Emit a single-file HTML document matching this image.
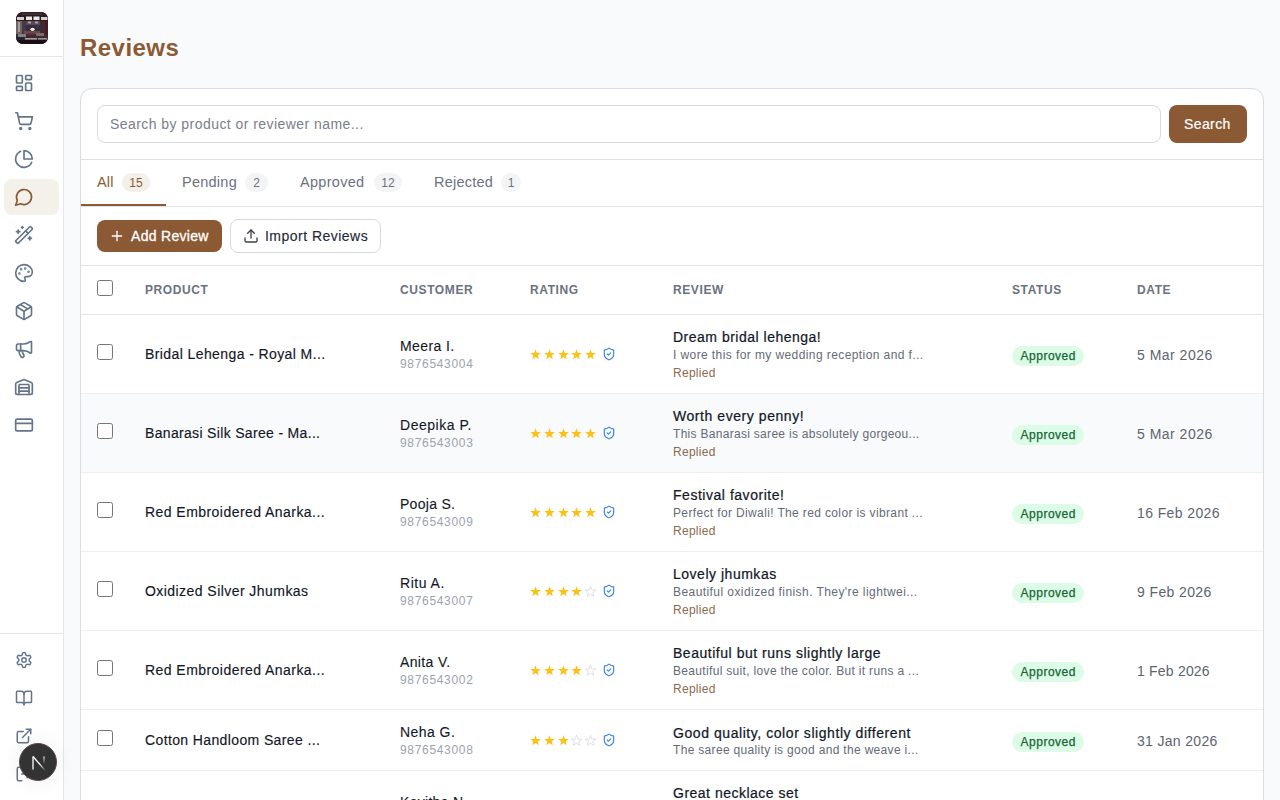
<!DOCTYPE html><html><head><meta charset="utf-8"><style>
*{box-sizing:border-box;margin:0;padding:0}
html,body{width:1280px;height:800px;overflow:hidden}
body{font-family:"Liberation Sans",sans-serif;background:#f9fafb;color:#111827;position:relative}
.i{position:absolute;fill:none;stroke-linecap:round;stroke-linejoin:round;overflow:visible}
.a{position:absolute;white-space:nowrap}
.side{position:absolute;left:0;top:0;width:64px;height:800px;background:#fff;border-right:1px solid #e5e7eb}
.logo{position:absolute;left:16px;top:12px;width:32px;height:32px;border-radius:7px;overflow:hidden;background:#2a1c22}
.hl{position:absolute;height:1px;background:#e5e7eb}
.nav{position:absolute;left:4px;top:179px;width:55px;height:36px;border-radius:8px;background:#f4f0ea}
h1{position:absolute;left:80px;top:34px;font-size:24px;line-height:28px;font-weight:700;color:#8b5a34;letter-spacing:0.45px}
.card{position:absolute;left:80px;top:88px;width:1184px;height:760px;background:#fff;border:1px solid #d9dde3;border-radius:12px;overflow:hidden}
.inp{position:absolute;left:16px;top:16px;width:1064px;height:38px;border:1px solid #d5d9e0;border-radius:8px}
.ph{left:29px;top:28px;font-size:14px;line-height:14px;color:#7a808a;letter-spacing:0.45px}
.sbtn{position:absolute;left:1088px;top:16px;width:78px;height:38px;border-radius:8px;background:#8b5a34}
.sbt{left:1103px;top:28px;font-size:14px;line-height:14px;color:#fff;letter-spacing:0.3px;-webkit-text-stroke:0.2px #fff}
.tab{font-size:14.5px;line-height:14px;color:#6b7280;letter-spacing:0.2px}
.bdg{position:absolute;height:19px;border-radius:10px;background:#f3f4f6;font-size:12px;line-height:21px;color:#6b7280;text-align:center}
.btn1{position:absolute;left:16px;top:131px;width:125px;height:32px;border-radius:8px;background:#8b5a34}
.btn2{position:absolute;left:149px;top:130px;width:151px;height:34px;border-radius:8px;border:1px solid #d5d9e0;background:#fff}
.th{font-size:12px;line-height:12px;font-weight:700;color:#6b7280;letter-spacing:0.6px}
.cb{position:absolute;width:16px;height:16px;border:1.4px solid #767676;border-radius:2.5px;background:#fff}
.row{position:absolute;left:0;width:1182px;border-bottom:1px solid #eceef1}
.pn{font-size:14px;line-height:14px;color:#111827;letter-spacing:0.4px;-webkit-text-stroke:0.15px #111827}
.cn{font-size:14px;line-height:14px;color:#111827;letter-spacing:0.3px;-webkit-text-stroke:0.1px #111827}
.ph2{font-size:12px;line-height:12px;color:#9ca3af;letter-spacing:0.9px}
.rt{font-size:14px;line-height:14px;color:#111827;letter-spacing:0.5px;-webkit-text-stroke:0.22px #111827}
.rx{font-size:12px;line-height:12px;color:#646b77;letter-spacing:0.35px}
.rp{font-size:12px;line-height:12px;color:#8b6a4e;letter-spacing:0.12px}
.st{position:absolute;width:72px;height:20px;border-radius:10px;background:#dcfce7;color:#166534;font-size:12px;line-height:20px;text-align:center;font-weight:400;letter-spacing:0.5px;-webkit-text-stroke:0.25px #166534;text-indent:0.5px}
.dt{font-size:14px;line-height:14px;color:#5d6470;letter-spacing:0.65px}
.nbtn{position:absolute;left:19px;top:743px;width:38px;height:38px;border-radius:50%;background:#333;border:1px solid #5a4a48;box-shadow:0 0 16px 6px rgba(0,0,0,0.04)}
</style></head><body>
<div class="side"><div class="logo"><svg width="32" height="32" viewBox="0 0 32 32" style="display:block;filter:blur(0.45px)"><rect x="0" y="0" width="32" height="32" fill="#3a2c30"/><rect x="0" y="0" width="32" height="4" fill="#2c1e22"/><rect x="6" y="1" width="20" height="2" fill="#3e302c"/><rect x="0" y="4" width="32" height="5" fill="#2a1c22"/><rect x="1" y="5" width="7" height="3" fill="#d4d0d2"/><rect x="10" y="4.5" width="6" height="3.5" fill="#ece8ea"/><rect x="17.5" y="4.5" width="6" height="3.5" fill="#ece8ea"/><rect x="25" y="5" width="6.5" height="3" fill="#d8d0ce"/><rect x="0" y="9" width="6" height="13" fill="#6e6466"/><rect x="2" y="10" width="2" height="10" fill="#a89ea0"/><rect x="6" y="9" width="4" height="12" fill="#4a3a40"/><rect x="10" y="9" width="14" height="4" fill="#5a4a50"/><rect x="12" y="9.5" width="3" height="2" fill="#a8a0a4"/><rect x="19" y="9.5" width="3" height="2" fill="#a8a0a4"/><rect x="24" y="9" width="4" height="14" fill="#3a2a30"/><rect x="29" y="9" width="3" height="14" fill="#4a1822"/><ellipse cx="10.5" cy="14.8" rx="2.2" ry="1.8" fill="#2a3264"/><ellipse cx="21.5" cy="14.8" rx="2.2" ry="1.8" fill="#2a3264"/><ellipse cx="16.5" cy="17.3" rx="2.2" ry="1.6" fill="#f2ece6"/><rect x="8" y="19" width="16" height="3" fill="#6a4a50"/><rect x="2" y="22" width="8" height="3" fill="#8a7e80"/><rect x="12" y="21" width="6" height="2" fill="#6a3038"/><rect x="20" y="21" width="8" height="3" fill="#7a6a6c"/><rect x="0" y="25" width="8" height="3" fill="#1e2638"/><rect x="9" y="26" width="12" height="1.6" fill="#a8989c"/><rect x="22" y="26" width="9" height="1.6" fill="#988c90"/><rect x="0" y="28" width="32" height="4" fill="#1a0e14"/></svg></div><div class="hl" style="left:0;top:56px;width:63px"></div>
<div class="nav"></div>
<svg class="i" style="left:14px;top:73px;width:20px;height:20px;stroke:#64748b;stroke-width:2" viewBox="0 0 24 24" ><rect width="7" height="9" x="3" y="3" rx="1"/><rect width="7" height="5" x="14" y="3" rx="1"/><rect width="7" height="9" x="14" y="12" rx="1"/><rect width="7" height="5" x="3" y="16" rx="1"/></svg>
<svg class="i" style="left:14px;top:111px;width:20px;height:20px;stroke:#64748b;stroke-width:2" viewBox="0 0 24 24" ><circle cx="8" cy="21" r="1"/><circle cx="19" cy="21" r="1"/><path d="M2.05 2.05h2l2.66 12.42a2 2 0 0 0 2 1.58h9.78a2 2 0 0 0 1.95-1.57l1.65-7.43H5.12"/></svg>
<svg class="i" style="left:14px;top:149px;width:20px;height:20px;stroke:#64748b;stroke-width:2" viewBox="0 0 24 24" ><path d="M21.21 15.89A10 10 0 1 1 8 2.83"/><path d="M22 12A10 10 0 0 0 12 2v10z"/></svg>
<svg class="i" style="left:14px;top:187px;width:20px;height:20px;stroke:#8b5a34;stroke-width:2" viewBox="0 0 24 24" ><path d="M7.9 20A9 9 0 1 0 4 16.1L2 22Z"/></svg>
<svg class="i" style="left:14px;top:225px;width:20px;height:20px;stroke:#64748b;stroke-width:2" viewBox="0 0 24 24" ><path d="m21.64 3.64-1.28-1.28a1.21 1.21 0 0 0-1.72 0L2.36 18.64a1.21 1.21 0 0 0 0 1.72l1.28 1.28a1.2 1.2 0 0 0 1.72 0L21.64 5.36a1.2 1.2 0 0 0 0-1.72"/><path d="m14 7 3 3"/><path d="M5 6v4"/><path d="M19 14v4"/><path d="M10 2v2"/><path d="M7 8H3"/><path d="M21 16h-4"/><path d="M11 3H9"/></svg>
<svg class="i" style="left:14px;top:263px;width:20px;height:20px;stroke:#64748b;stroke-width:2" viewBox="0 0 24 24" ><circle cx="13.5" cy="6.5" r=".5" fill="currentColor"/><circle cx="17.5" cy="10.5" r=".5" fill="currentColor"/><circle cx="8.5" cy="7.5" r=".5" fill="currentColor"/><circle cx="6.5" cy="12.5" r=".5" fill="currentColor"/><path d="M12 2C6.5 2 2 6.5 2 12s4.5 10 10 10c.926 0 1.648-.746 1.648-1.688 0-.437-.18-.835-.437-1.125-.29-.289-.438-.652-.438-1.125a1.64 1.64 0 0 1 1.668-1.668h1.996c3.051 0 5.555-2.503 5.555-5.554C21.965 6.012 17.461 2 12 2z"/></svg>
<svg class="i" style="left:14px;top:301px;width:20px;height:20px;stroke:#64748b;stroke-width:2" viewBox="0 0 24 24" ><path d="M11 21.73a2 2 0 0 0 2 0l7-4A2 2 0 0 0 21 16V8a2 2 0 0 0-1-1.73l-7-4a2 2 0 0 0-2 0l-7 4A2 2 0 0 0 3 8v8a2 2 0 0 0 1 1.73z"/><path d="M12 22V12"/><path d="m3.3 7 7.703 4.734a2 2 0 0 0 1.994 0L20.7 7"/><path d="m7.5 4.27 9 5.15"/></svg>
<svg class="i" style="left:14px;top:339px;width:20px;height:20px;stroke:#64748b;stroke-width:2" viewBox="0 0 24 24" ><path d="M11 6a13 13 0 0 0 8.4-2.8A1 1 0 0 1 21 4v12a1 1 0 0 1-1.6.8A13 13 0 0 0 11 14H5a2 2 0 0 1-2-2V8a2 2 0 0 1 2-2z"/><path d="M6 14a12 12 0 0 0 2.4 7.2 2 2 0 0 0 3.2-2.4A8 8 0 0 1 10 14"/><path d="M8 6v8"/></svg>
<svg class="i" style="left:14px;top:377px;width:20px;height:20px;stroke:#64748b;stroke-width:2" viewBox="0 0 24 24" ><path d="M18 21V10a1 1 0 0 0-1-1H7a1 1 0 0 0-1 1v11"/><path d="M22 19a2 2 0 0 1-2 2H4a2 2 0 0 1-2-2V8.35a2 2 0 0 1 1.26-1.86l8-3.2a2 2 0 0 1 1.48 0l8 3.2A2 2 0 0 1 22 8.35z"/><path d="M6 13h12"/><path d="M6 17h12"/></svg>
<svg class="i" style="left:14px;top:415px;width:20px;height:20px;stroke:#64748b;stroke-width:2" viewBox="0 0 24 24" ><rect width="20" height="14" x="2" y="5" rx="2"/><line x1="2" x2="22" y1="10" y2="10"/></svg>
<div class="hl" style="left:0;top:633px;width:63px"></div>
<svg class="i" style="left:15px;top:651px;width:18px;height:18px;stroke:#64748b;stroke-width:2" viewBox="0 0 24 24" ><path d="M12.22 2h-.44a2 2 0 0 0-2 2v.18a2 2 0 0 1-1 1.73l-.43.25a2 2 0 0 1-2 0l-.15-.08a2 2 0 0 0-2.73.73l-.22.38a2 2 0 0 0 .73 2.73l.15.1a2 2 0 0 1 1 1.72v.51a2 2 0 0 1-1 1.74l-.15.09a2 2 0 0 0-.73 2.73l.22.38a2 2 0 0 0 2.730.73l.15-.08a2 2 0 0 1 2 0l.43.25a2 2 0 0 1 1 1.73V20a2 2 0 0 0 2 2h.44a2 2 0 0 0 2-2v-.18a2 2 0 0 1 1-1.73l.43-.25a2 2 0 0 1 2 0l.15.08a2 2 0 0 0 2.73-.73l.22-.39a2 2 0 0 0-.73-2.73l-.15-.08a2 2 0 0 1-1-1.740v-.5a2 2 0 0 1 1-1.74l.15-.09a2 2 0 0 0 .73-2.73l-.22-.38a2 2 0 0 0-2.73-.73l-.15.08a2 2 0 0 1-2 0l-.43-.25a2 2 0 0 1-1-1.73V4a2 2 0 0 0-2-2z"/><circle cx="12" cy="12" r="3"/></svg>
<svg class="i" style="left:15px;top:689px;width:18px;height:18px;stroke:#64748b;stroke-width:2" viewBox="0 0 24 24" ><path d="M12 7v14"/><path d="M3 18a1 1 0 0 1-1-1V4a1 1 0 0 1 1-1h5a4 4 0 0 1 4 4 4 4 0 0 1 4-4h5a1 1 0 0 1 1 1v13a1 1 0 0 1-1 1h-6a3 3 0 0 0-3 3 3 3 0 0 0-3-3z"/></svg>
<svg class="i" style="left:15px;top:727px;width:18px;height:18px;stroke:#64748b;stroke-width:2" viewBox="0 0 24 24" ><path d="M15 3h6v6"/><path d="M10 14 21 3"/><path d="M18 13v6a2 2 0 0 1-2 2H5a2 2 0 0 1-2-2V8a2 2 0 0 1 2-2h6"/></svg>
<svg class="i" style="left:15px;top:765px;width:18px;height:18px;stroke:#64748b;stroke-width:2" viewBox="0 0 24 24" ><path d="M9 21H5a2 2 0 0 1-2-2V5a2 2 0 0 1 2-2h4"/><polyline points="16 17 21 12 16 7"/><line x1="21" x2="9" y1="12" y2="12"/></svg>
</div>
<h1>Reviews</h1>
<div class="card">
<div class="inp"></div><div class="a ph" style=";letter-spacing:0.444px">Search by product or reviewer name...</div>
<div class="sbtn"></div><div class="a sbt" style=";letter-spacing:0.400px">Search</div>
<div class="hl" style="left:0;top:70px;width:1182px;background:#dfe2e7"></div>
<div class="a tab" style="left:16px;top:86px;color:#8b5a34">All</div>
<div class="bdg" style="left:41px;top:84px;width:28px;background:#f3efe9;color:#8b5a34">15</div>
<div class="a tab" style="left:101px;top:86px;color:#6b7280;letter-spacing:0.250px">Pending</div>
<div class="bdg" style="left:164px;top:84px;width:23px;background:#f3f4f6;color:#6b7280">2</div>
<div class="a tab" style="left:219px;top:86px;color:#6b7280;letter-spacing:0.300px">Approved</div>
<div class="bdg" style="left:293px;top:84px;width:28px;background:#f3f4f6;color:#6b7280">12</div>
<div class="a tab" style="left:353px;top:86px;color:#6b7280;letter-spacing:0.214px">Rejected</div>
<div class="bdg" style="left:420px;top:84px;width:20px;background:#f3f4f6;color:#6b7280">1</div>
<div class="hl" style="left:0;top:117px;width:1182px;background:#dfe2e7"></div>
<div class="hl" style="left:0;top:115px;width:85px;height:2px;background:#8b5a34"></div>
<div class="btn1"></div>
<svg class="i" style="left:28px;top:139px;width:16px;height:16px;stroke:#fff;stroke-width:2" viewBox="0 0 24 24" ><path d="M5 12h14"/><path d="M12 5v14"/></svg>
<div class="a" style="left:50px;top:140px;font-size:14px;line-height:14px;color:#fff;font-weight:400;letter-spacing:0.45px;-webkit-text-stroke:0.3px #fff;letter-spacing:0.300px">Add Review</div>
<div class="btn2"></div>
<svg class="i" style="left:162px;top:139px;width:16px;height:16px;stroke:#374151;stroke-width:2" viewBox="0 0 24 24" ><path d="M21 15v4a2 2 0 0 1-2 2H5a2 2 0 0 1-2-2v-4"/><polyline points="17 8 12 3 7 8"/><line x1="12" x2="12" y1="3" y2="15"/></svg>
<div class="a" style="left:184px;top:140px;font-size:14px;line-height:14px;color:#1f2937;letter-spacing:0.25px;-webkit-text-stroke:0.15px #1f2937;letter-spacing:0.477px">Import Reviews</div>
<div class="hl" style="left:0;top:176px;width:1182px;background:#dfe2e7"></div>
<div class="cb" style="left:16px;top:191px"></div>
<div class="a th" style="left:64px;top:195px">PRODUCT</div>
<div class="a th" style="left:319px;top:195px">CUSTOMER</div>
<div class="a th" style="left:449px;top:195px">RATING</div>
<div class="a th" style="left:592px;top:195px">REVIEW</div>
<div class="a th" style="left:931px;top:195px">STATUS</div>
<div class="a th" style="left:1056px;top:195px">DATE</div>
<div class="hl" style="left:0;top:225px;width:1182px;background:#e5e7eb"></div>
<div class="row" style="top:226px;height:79px;background:#fff"></div>
<div class="cb" style="left:16px;top:255px"></div>
<div class="a pn" style="left:64px;top:258px;letter-spacing:0.404px">Bridal Lehenga - Royal M...</div>
<div class="a cn" style="left:319px;top:250px;letter-spacing:0.386px">Meera I.</div>
<div class="a ph2" style="left:319px;top:269px;letter-spacing:0.678px">9876543004</div>
<svg class="a" style="left:449px;top:259.80px;width:11px;height:11px;overflow:visible" viewBox="0 0 11 11"><polygon points="5.50,0.20 6.85,3.94 10.83,4.07 7.69,6.51 8.79,10.33 5.50,8.10 2.21,10.33 3.31,6.51 0.17,4.07 4.15,3.94" fill="#fdc014" /></svg>
<svg class="a" style="left:463px;top:259.80px;width:11px;height:11px;overflow:visible" viewBox="0 0 11 11"><polygon points="5.50,0.20 6.85,3.94 10.83,4.07 7.69,6.51 8.79,10.33 5.50,8.10 2.21,10.33 3.31,6.51 0.17,4.07 4.15,3.94" fill="#fdc014" /></svg>
<svg class="a" style="left:477px;top:259.80px;width:11px;height:11px;overflow:visible" viewBox="0 0 11 11"><polygon points="5.50,0.20 6.85,3.94 10.83,4.07 7.69,6.51 8.79,10.33 5.50,8.10 2.21,10.33 3.31,6.51 0.17,4.07 4.15,3.94" fill="#fdc014" /></svg>
<svg class="a" style="left:490px;top:259.80px;width:11px;height:11px;overflow:visible" viewBox="0 0 11 11"><polygon points="5.50,0.20 6.85,3.94 10.83,4.07 7.69,6.51 8.79,10.33 5.50,8.10 2.21,10.33 3.31,6.51 0.17,4.07 4.15,3.94" fill="#fdc014" /></svg>
<svg class="a" style="left:504px;top:259.80px;width:11px;height:11px;overflow:visible" viewBox="0 0 11 11"><polygon points="5.50,0.20 6.85,3.94 10.83,4.07 7.69,6.51 8.79,10.33 5.50,8.10 2.21,10.33 3.31,6.51 0.17,4.07 4.15,3.94" fill="#fdc014" /></svg>
<svg class="i" style="left:521px;top:258px;width:14px;height:14px;stroke:#3b82f6;stroke-width:2" viewBox="0 0 24 24" ><path d="M20 13c0 5-3.5 7.5-7.66 8.950a1 1 0 0 1-.67-.01C7.5 20.5 4 18 4 13V6a1 1 0 0 1 1-1c2 0 4.5-1.2 6.24-2.72a1.17 1.17 0 0 1 1.52 0C14.51 3.81 17 5 19 5a1 1 0 0 1 1 1z"/><path d="m9 12 2 2 4-4"/></svg>
<div class="a rt" style="left:592px;top:241px;letter-spacing:0.500px">Dream bridal lehenga!</div>
<div class="a rx" style="left:592px;top:260px;letter-spacing:0.409px">I wore this for my wedding reception and f...</div>
<div class="a rp" style="left:592px;top:278px;letter-spacing:0.283px">Replied</div>
<div class="st" style="left:931px;top:257px">Approved</div>
<div class="a dt" style="left:1056px;top:259px;letter-spacing:0.489px">5 Mar 2026</div>
<div class="row" style="top:305px;height:79px;background:#f9fafb"></div>
<div class="cb" style="left:16px;top:334px"></div>
<div class="a pn" style="left:64px;top:337px;letter-spacing:0.327px">Banarasi Silk Saree - Ma...</div>
<div class="a cn" style="left:319px;top:329px;letter-spacing:0.522px">Deepika P.</div>
<div class="a ph2" style="left:319px;top:348px;letter-spacing:0.678px">9876543003</div>
<svg class="a" style="left:449px;top:338.80px;width:11px;height:11px;overflow:visible" viewBox="0 0 11 11"><polygon points="5.50,0.20 6.85,3.94 10.83,4.07 7.69,6.51 8.79,10.33 5.50,8.10 2.21,10.33 3.31,6.51 0.17,4.07 4.15,3.94" fill="#fdc014" /></svg>
<svg class="a" style="left:463px;top:338.80px;width:11px;height:11px;overflow:visible" viewBox="0 0 11 11"><polygon points="5.50,0.20 6.85,3.94 10.83,4.07 7.69,6.51 8.79,10.33 5.50,8.10 2.21,10.33 3.31,6.51 0.17,4.07 4.15,3.94" fill="#fdc014" /></svg>
<svg class="a" style="left:477px;top:338.80px;width:11px;height:11px;overflow:visible" viewBox="0 0 11 11"><polygon points="5.50,0.20 6.85,3.94 10.83,4.07 7.69,6.51 8.79,10.33 5.50,8.10 2.21,10.33 3.31,6.51 0.17,4.07 4.15,3.94" fill="#fdc014" /></svg>
<svg class="a" style="left:490px;top:338.80px;width:11px;height:11px;overflow:visible" viewBox="0 0 11 11"><polygon points="5.50,0.20 6.85,3.94 10.83,4.07 7.69,6.51 8.79,10.33 5.50,8.10 2.21,10.33 3.31,6.51 0.17,4.07 4.15,3.94" fill="#fdc014" /></svg>
<svg class="a" style="left:504px;top:338.80px;width:11px;height:11px;overflow:visible" viewBox="0 0 11 11"><polygon points="5.50,0.20 6.85,3.94 10.83,4.07 7.69,6.51 8.79,10.33 5.50,8.10 2.21,10.33 3.31,6.51 0.17,4.07 4.15,3.94" fill="#fdc014" /></svg>
<svg class="i" style="left:521px;top:337px;width:14px;height:14px;stroke:#3b82f6;stroke-width:2" viewBox="0 0 24 24" ><path d="M20 13c0 5-3.5 7.5-7.66 8.950a1 1 0 0 1-.67-.01C7.5 20.5 4 18 4 13V6a1 1 0 0 1 1-1c2 0 4.5-1.2 6.24-2.72a1.17 1.17 0 0 1 1.52 0C14.51 3.81 17 5 19 5a1 1 0 0 1 1 1z"/><path d="m9 12 2 2 4-4"/></svg>
<div class="a rt" style="left:592px;top:320px;letter-spacing:0.559px">Worth every penny!</div>
<div class="a rx" style="left:592px;top:339px;letter-spacing:0.295px">This Banarasi saree is absolutely gorgeou...</div>
<div class="a rp" style="left:592px;top:357px;letter-spacing:0.283px">Replied</div>
<div class="st" style="left:931px;top:336px">Approved</div>
<div class="a dt" style="left:1056px;top:338px;letter-spacing:0.489px">5 Mar 2026</div>
<div class="row" style="top:384px;height:79px;background:#fff"></div>
<div class="cb" style="left:16px;top:413px"></div>
<div class="a pn" style="left:64px;top:416px;letter-spacing:0.450px">Red Embroidered Anarka...</div>
<div class="a cn" style="left:319px;top:408px;letter-spacing:0.286px">Pooja S.</div>
<div class="a ph2" style="left:319px;top:427px;letter-spacing:0.678px">9876543009</div>
<svg class="a" style="left:449px;top:417.80px;width:11px;height:11px;overflow:visible" viewBox="0 0 11 11"><polygon points="5.50,0.20 6.85,3.94 10.83,4.07 7.69,6.51 8.79,10.33 5.50,8.10 2.21,10.33 3.31,6.51 0.17,4.07 4.15,3.94" fill="#fdc014" /></svg>
<svg class="a" style="left:463px;top:417.80px;width:11px;height:11px;overflow:visible" viewBox="0 0 11 11"><polygon points="5.50,0.20 6.85,3.94 10.83,4.07 7.69,6.51 8.79,10.33 5.50,8.10 2.21,10.33 3.31,6.51 0.17,4.07 4.15,3.94" fill="#fdc014" /></svg>
<svg class="a" style="left:477px;top:417.80px;width:11px;height:11px;overflow:visible" viewBox="0 0 11 11"><polygon points="5.50,0.20 6.85,3.94 10.83,4.07 7.69,6.51 8.79,10.33 5.50,8.10 2.21,10.33 3.31,6.51 0.17,4.07 4.15,3.94" fill="#fdc014" /></svg>
<svg class="a" style="left:490px;top:417.80px;width:11px;height:11px;overflow:visible" viewBox="0 0 11 11"><polygon points="5.50,0.20 6.85,3.94 10.83,4.07 7.69,6.51 8.79,10.33 5.50,8.10 2.21,10.33 3.31,6.51 0.17,4.07 4.15,3.94" fill="#fdc014" /></svg>
<svg class="a" style="left:504px;top:417.80px;width:11px;height:11px;overflow:visible" viewBox="0 0 11 11"><polygon points="5.50,0.20 6.85,3.94 10.83,4.07 7.69,6.51 8.79,10.33 5.50,8.10 2.21,10.33 3.31,6.51 0.17,4.07 4.15,3.94" fill="#fdc014" /></svg>
<svg class="i" style="left:521px;top:416px;width:14px;height:14px;stroke:#3b82f6;stroke-width:2" viewBox="0 0 24 24" ><path d="M20 13c0 5-3.5 7.5-7.66 8.950a1 1 0 0 1-.67-.01C7.5 20.5 4 18 4 13V6a1 1 0 0 1 1-1c2 0 4.5-1.2 6.24-2.72a1.17 1.17 0 0 1 1.52 0C14.51 3.81 17 5 19 5a1 1 0 0 1 1 1z"/><path d="m9 12 2 2 4-4"/></svg>
<div class="a rt" style="left:592px;top:399px;letter-spacing:0.529px">Festival favorite!</div>
<div class="a rx" style="left:592px;top:418px;letter-spacing:0.362px">Perfect for Diwali! The red color is vibrant ...</div>
<div class="a rp" style="left:592px;top:436px;letter-spacing:0.283px">Replied</div>
<div class="st" style="left:931px;top:415px">Approved</div>
<div class="a dt" style="left:1056px;top:417px;letter-spacing:0.390px">16 Feb 2026</div>
<div class="row" style="top:463px;height:79px;background:#fff"></div>
<div class="cb" style="left:16px;top:492px"></div>
<div class="a pn" style="left:64px;top:495px;letter-spacing:0.445px">Oxidized Silver Jhumkas</div>
<div class="a cn" style="left:319px;top:487px;letter-spacing:0.517px">Ritu A.</div>
<div class="a ph2" style="left:319px;top:506px;letter-spacing:0.678px">9876543007</div>
<svg class="a" style="left:449px;top:496.80px;width:11px;height:11px;overflow:visible" viewBox="0 0 11 11"><polygon points="5.50,0.20 6.85,3.94 10.83,4.07 7.69,6.51 8.79,10.33 5.50,8.10 2.21,10.33 3.31,6.51 0.17,4.07 4.15,3.94" fill="#fdc014" /></svg>
<svg class="a" style="left:463px;top:496.80px;width:11px;height:11px;overflow:visible" viewBox="0 0 11 11"><polygon points="5.50,0.20 6.85,3.94 10.83,4.07 7.69,6.51 8.79,10.33 5.50,8.10 2.21,10.33 3.31,6.51 0.17,4.07 4.15,3.94" fill="#fdc014" /></svg>
<svg class="a" style="left:477px;top:496.80px;width:11px;height:11px;overflow:visible" viewBox="0 0 11 11"><polygon points="5.50,0.20 6.85,3.94 10.83,4.07 7.69,6.51 8.79,10.33 5.50,8.10 2.21,10.33 3.31,6.51 0.17,4.07 4.15,3.94" fill="#fdc014" /></svg>
<svg class="a" style="left:490px;top:496.80px;width:11px;height:11px;overflow:visible" viewBox="0 0 11 11"><polygon points="5.50,0.20 6.85,3.94 10.83,4.07 7.69,6.51 8.79,10.33 5.50,8.10 2.21,10.33 3.31,6.51 0.17,4.07 4.15,3.94" fill="#fdc014" /></svg>
<svg class="a" style="left:504px;top:496.80px;width:11px;height:11px;overflow:visible" viewBox="0 0 11 11"><polygon points="5.50,0.20 6.85,3.94 10.83,4.07 7.69,6.51 8.79,10.33 5.50,8.10 2.21,10.33 3.31,6.51 0.17,4.07 4.15,3.94" fill="none" stroke="#d1d5db" stroke-width="0.75"/></svg>
<svg class="i" style="left:521px;top:495px;width:14px;height:14px;stroke:#3b82f6;stroke-width:2" viewBox="0 0 24 24" ><path d="M20 13c0 5-3.5 7.5-7.66 8.950a1 1 0 0 1-.67-.01C7.5 20.5 4 18 4 13V6a1 1 0 0 1 1-1c2 0 4.5-1.2 6.24-2.72a1.17 1.17 0 0 1 1.52 0C14.51 3.81 17 5 19 5a1 1 0 0 1 1 1z"/><path d="m9 12 2 2 4-4"/></svg>
<div class="a rt" style="left:592px;top:478px;letter-spacing:0.515px">Lovely jhumkas</div>
<div class="a rx" style="left:592px;top:497px;letter-spacing:0.429px">Beautiful oxidized finish. They're lightwei...</div>
<div class="a rp" style="left:592px;top:515px;letter-spacing:0.283px">Replied</div>
<div class="st" style="left:931px;top:494px">Approved</div>
<div class="a dt" style="left:1056px;top:496px;letter-spacing:0.389px">9 Feb 2026</div>
<div class="row" style="top:542px;height:79px;background:#fff"></div>
<div class="cb" style="left:16px;top:571px"></div>
<div class="a pn" style="left:64px;top:574px;letter-spacing:0.450px">Red Embroidered Anarka...</div>
<div class="a cn" style="left:319px;top:566px;letter-spacing:0.357px">Anita V.</div>
<div class="a ph2" style="left:319px;top:585px;letter-spacing:0.678px">9876543002</div>
<svg class="a" style="left:449px;top:575.80px;width:11px;height:11px;overflow:visible" viewBox="0 0 11 11"><polygon points="5.50,0.20 6.85,3.94 10.83,4.07 7.69,6.51 8.79,10.33 5.50,8.10 2.21,10.33 3.31,6.51 0.17,4.07 4.15,3.94" fill="#fdc014" /></svg>
<svg class="a" style="left:463px;top:575.80px;width:11px;height:11px;overflow:visible" viewBox="0 0 11 11"><polygon points="5.50,0.20 6.85,3.94 10.83,4.07 7.69,6.51 8.79,10.33 5.50,8.10 2.21,10.33 3.31,6.51 0.17,4.07 4.15,3.94" fill="#fdc014" /></svg>
<svg class="a" style="left:477px;top:575.80px;width:11px;height:11px;overflow:visible" viewBox="0 0 11 11"><polygon points="5.50,0.20 6.85,3.94 10.83,4.07 7.69,6.51 8.79,10.33 5.50,8.10 2.21,10.33 3.31,6.51 0.17,4.07 4.15,3.94" fill="#fdc014" /></svg>
<svg class="a" style="left:490px;top:575.80px;width:11px;height:11px;overflow:visible" viewBox="0 0 11 11"><polygon points="5.50,0.20 6.85,3.94 10.83,4.07 7.69,6.51 8.79,10.33 5.50,8.10 2.21,10.33 3.31,6.51 0.17,4.07 4.15,3.94" fill="#fdc014" /></svg>
<svg class="a" style="left:504px;top:575.80px;width:11px;height:11px;overflow:visible" viewBox="0 0 11 11"><polygon points="5.50,0.20 6.85,3.94 10.83,4.07 7.69,6.51 8.79,10.33 5.50,8.10 2.21,10.33 3.31,6.51 0.17,4.07 4.15,3.94" fill="none" stroke="#d1d5db" stroke-width="0.75"/></svg>
<svg class="i" style="left:521px;top:574px;width:14px;height:14px;stroke:#3b82f6;stroke-width:2" viewBox="0 0 24 24" ><path d="M20 13c0 5-3.5 7.5-7.66 8.950a1 1 0 0 1-.67-.01C7.5 20.5 4 18 4 13V6a1 1 0 0 1 1-1c2 0 4.5-1.2 6.24-2.72a1.17 1.17 0 0 1 1.52 0C14.51 3.81 17 5 19 5a1 1 0 0 1 1 1z"/><path d="m9 12 2 2 4-4"/></svg>
<div class="a rt" style="left:592px;top:557px;letter-spacing:0.528px">Beautiful but runs slightly large</div>
<div class="a rx" style="left:592px;top:576px;letter-spacing:0.325px">Beautiful suit, love the color. But it runs a ...</div>
<div class="a rp" style="left:592px;top:594px;letter-spacing:0.283px">Replied</div>
<div class="st" style="left:931px;top:573px">Approved</div>
<div class="a dt" style="left:1056px;top:575px;letter-spacing:0.200px">1 Feb 2026</div>
<div class="row" style="top:621px;height:61px;background:#fff"></div>
<div class="cb" style="left:16px;top:641px"></div>
<div class="a pn" style="left:64px;top:644px;letter-spacing:0.379px">Cotton Handloom Saree ...</div>
<div class="a cn" style="left:319px;top:636px;letter-spacing:0.450px">Neha G.</div>
<div class="a ph2" style="left:319px;top:655px;letter-spacing:0.678px">9876543008</div>
<svg class="a" style="left:449px;top:645.80px;width:11px;height:11px;overflow:visible" viewBox="0 0 11 11"><polygon points="5.50,0.20 6.85,3.94 10.83,4.07 7.69,6.51 8.79,10.33 5.50,8.10 2.21,10.33 3.31,6.51 0.17,4.07 4.15,3.94" fill="#fdc014" /></svg>
<svg class="a" style="left:463px;top:645.80px;width:11px;height:11px;overflow:visible" viewBox="0 0 11 11"><polygon points="5.50,0.20 6.85,3.94 10.83,4.07 7.69,6.51 8.79,10.33 5.50,8.10 2.21,10.33 3.31,6.51 0.17,4.07 4.15,3.94" fill="#fdc014" /></svg>
<svg class="a" style="left:477px;top:645.80px;width:11px;height:11px;overflow:visible" viewBox="0 0 11 11"><polygon points="5.50,0.20 6.85,3.94 10.83,4.07 7.69,6.51 8.79,10.33 5.50,8.10 2.21,10.33 3.31,6.51 0.17,4.07 4.15,3.94" fill="#fdc014" /></svg>
<svg class="a" style="left:490px;top:645.80px;width:11px;height:11px;overflow:visible" viewBox="0 0 11 11"><polygon points="5.50,0.20 6.85,3.94 10.83,4.07 7.69,6.51 8.79,10.33 5.50,8.10 2.21,10.33 3.31,6.51 0.17,4.07 4.15,3.94" fill="none" stroke="#d1d5db" stroke-width="0.75"/></svg>
<svg class="a" style="left:504px;top:645.80px;width:11px;height:11px;overflow:visible" viewBox="0 0 11 11"><polygon points="5.50,0.20 6.85,3.94 10.83,4.07 7.69,6.51 8.79,10.33 5.50,8.10 2.21,10.33 3.31,6.51 0.17,4.07 4.15,3.94" fill="none" stroke="#d1d5db" stroke-width="0.75"/></svg>
<svg class="i" style="left:521px;top:644px;width:14px;height:14px;stroke:#3b82f6;stroke-width:2" viewBox="0 0 24 24" ><path d="M20 13c0 5-3.5 7.5-7.66 8.950a1 1 0 0 1-.67-.01C7.5 20.5 4 18 4 13V6a1 1 0 0 1 1-1c2 0 4.5-1.2 6.24-2.72a1.17 1.17 0 0 1 1.52 0C14.51 3.81 17 5 19 5a1 1 0 0 1 1 1z"/><path d="m9 12 2 2 4-4"/></svg>
<div class="a rt" style="left:592px;top:637px;letter-spacing:0.562px">Good quality, color slightly different</div>
<div class="a rx" style="left:592px;top:655px;letter-spacing:0.319px">The saree quality is good and the weave i...</div>
<div class="st" style="left:931px;top:643px">Approved</div>
<div class="a dt" style="left:1056px;top:645px;letter-spacing:0.320px">31 Jan 2026</div>
<div class="row" style="top:682px;height:79px;background:#fff"></div>
<div class="cb" style="left:16px;top:711px"></div>
<div class="a pn" style="left:64px;top:714px">Temple Necklace Set</div>
<div class="a cn" style="left:319px;top:706px">Kavitha N.</div>
<div class="a ph2" style="left:319px;top:725px;letter-spacing:0.678px">9876543006</div>
<svg class="a" style="left:449px;top:715.80px;width:11px;height:11px;overflow:visible" viewBox="0 0 11 11"><polygon points="5.50,0.20 6.85,3.94 10.83,4.07 7.69,6.51 8.79,10.33 5.50,8.10 2.21,10.33 3.31,6.51 0.17,4.07 4.15,3.94" fill="#fdc014" /></svg>
<svg class="a" style="left:463px;top:715.80px;width:11px;height:11px;overflow:visible" viewBox="0 0 11 11"><polygon points="5.50,0.20 6.85,3.94 10.83,4.07 7.69,6.51 8.79,10.33 5.50,8.10 2.21,10.33 3.31,6.51 0.17,4.07 4.15,3.94" fill="#fdc014" /></svg>
<svg class="a" style="left:477px;top:715.80px;width:11px;height:11px;overflow:visible" viewBox="0 0 11 11"><polygon points="5.50,0.20 6.85,3.94 10.83,4.07 7.69,6.51 8.79,10.33 5.50,8.10 2.21,10.33 3.31,6.51 0.17,4.07 4.15,3.94" fill="#fdc014" /></svg>
<svg class="a" style="left:490px;top:715.80px;width:11px;height:11px;overflow:visible" viewBox="0 0 11 11"><polygon points="5.50,0.20 6.85,3.94 10.83,4.07 7.69,6.51 8.79,10.33 5.50,8.10 2.21,10.33 3.31,6.51 0.17,4.07 4.15,3.94" fill="#fdc014" /></svg>
<svg class="a" style="left:504px;top:715.80px;width:11px;height:11px;overflow:visible" viewBox="0 0 11 11"><polygon points="5.50,0.20 6.85,3.94 10.83,4.07 7.69,6.51 8.79,10.33 5.50,8.10 2.21,10.33 3.31,6.51 0.17,4.07 4.15,3.94" fill="#fdc014" /></svg>
<svg class="i" style="left:521px;top:714px;width:14px;height:14px;stroke:#3b82f6;stroke-width:2" viewBox="0 0 24 24" ><path d="M20 13c0 5-3.5 7.5-7.66 8.950a1 1 0 0 1-.67-.01C7.5 20.5 4 18 4 13V6a1 1 0 0 1 1-1c2 0 4.5-1.2 6.24-2.72a1.17 1.17 0 0 1 1.52 0C14.51 3.81 17 5 19 5a1 1 0 0 1 1 1z"/><path d="m9 12 2 2 4-4"/></svg>
<div class="a rt" style="left:592px;top:697px">Great necklace set</div>
<div class="a rx" style="left:592px;top:716px">Lovely set, exactly as pictured...</div>
<div class="a rp" style="left:592px;top:734px;letter-spacing:0.283px">Replied</div>
<div class="st" style="left:931px;top:713px">Approved</div>
<div class="a dt" style="left:1056px;top:715px">28 Jan 2026</div>
</div>
<div class="nbtn"></div><svg class="a" style="left:30.5px;top:754.5px;width:16px;height:16px;overflow:visible" viewBox="0 0 16 16"><defs><linearGradient id="ng" gradientUnits="userSpaceOnUse" x1="0" y1="1.5" x2="0" y2="9"><stop offset="0" stop-color="#fff"/><stop offset="1" stop-color="#fff" stop-opacity="0"/></linearGradient><linearGradient id="nd" gradientUnits="userSpaceOnUse" x1="2" y1="1.5" x2="14" y2="15"><stop offset="0.55" stop-color="#fff"/><stop offset="1" stop-color="#fff" stop-opacity="0.1"/></linearGradient></defs><path d="M2 1.5V14.5" stroke="#fff" stroke-width="1.3" fill="none"/><path d="M2 1.5L13.8 15" stroke="url(#nd)" stroke-width="1.3" fill="none"/><path d="M13 1.5V9" stroke="url(#ng)" stroke-width="1.2" fill="none"/></svg>
</body></html>
